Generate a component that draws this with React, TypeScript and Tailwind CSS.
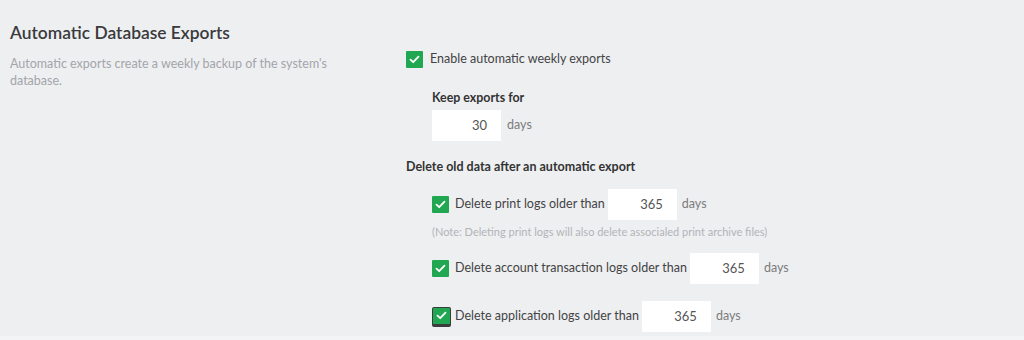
const font = { fontFamily: '"Lato", "Liberation Sans", sans-serif' };

function Check({ focused }: { focused?: boolean }) {
  return (
    <span
      className={
        focused
          ? 'flex h-[20px] w-[19px] shrink-0 items-center justify-center rounded-[2px] border border-b-[3px] border-[#3c3c3c] bg-[#21a651]'
          : 'flex h-[17px] w-[17px] shrink-0 items-center justify-center rounded-[1px] bg-[#21a651]'
      }
    >
      <svg width="11" height="9" viewBox="0 0 11 9" fill="none">
        <path d="M1.5 4.6L4.2 7.2L9.5 1.6" stroke="#fff" strokeWidth="1.8" strokeLinecap="round" strokeLinejoin="round" />
      </svg>
    </span>
  );
}

function NumBox({ value }: { value: string }) {
  return (
    <div className="flex h-[31px] w-[69px] items-center justify-end bg-white pr-[14px] text-[13px] text-[#555]">
      {value}
    </div>
  );
}

function LogRow({ label, focused }: { label: string; focused?: boolean }) {
  return (
    <div className="flex items-center">
      <div className="flex w-[23px] items-center">
        <Check focused={focused} />
      </div>
      <span className="mr-[3px] text-[12.5px] text-[#434345]">{label}</span>
      <NumBox value="365" />
      <span className="ml-[5px] text-[12.5px] text-[#7c7c7c]">days</span>
    </div>
  );
}

export default function App() {
  return (
    <div className="flex h-[340px] w-[1024px] flex-col bg-[#eeeff1]" style={font}>
      <div className="flex flex-1">
        {/* Left: section info */}
        <div className="w-[406px] shrink-0 pl-[10px] pt-[21px]">
          <h2 className="text-[17.4px] font-semibold leading-[24px] text-[#3a3a3c]">Automatic Database Exports</h2>
          <p className="mt-[10px] w-[340px] text-[12.5px] leading-[17px] text-[#a3a5a9]">
            Automatic exports create a weekly backup of the system's database.
          </p>
        </div>

        {/* Right: settings */}
        <div className="flex flex-col pt-[51px]">
          <div className="flex h-[17px] items-center">
            <Check />
            <span className="ml-[7px] text-[12.5px] text-[#434345]">Enable automatic weekly exports</span>
          </div>

          <div className="ml-[26px] mt-[21px] text-[12.4px] font-bold leading-[18px] text-[#333]">Keep exports for</div>
          <div className="ml-[26px] mt-[3px] flex items-center">
            <NumBox value="30" />
            <span className="ml-[6px] text-[12.5px] text-[#7c7c7c]">days</span>
          </div>

          <div className="mt-[17px] text-[12.5px] font-bold leading-[18px] text-[#333]">
            Delete old data after an automatic export
          </div>

          <div className="ml-[26px] mt-[13px] flex flex-col">
            <LogRow label="Delete print logs older than" />
            <p className="mt-[5px] text-[11px] leading-[14px] text-[#b2b4b8]">
              (Note: Deleting print logs will also delete associaled print archive files)
            </p>
            <div className="mt-[14px]">
              <LogRow label="Delete account transaction logs older than" />
            </div>
            <div className="mt-[17px]">
              <LogRow label="Delete application logs older than" focused />
            </div>
          </div>
        </div>
      </div>
      <div className="h-[4px] bg-[#f3f4f6]" />
    </div>
  );
}
